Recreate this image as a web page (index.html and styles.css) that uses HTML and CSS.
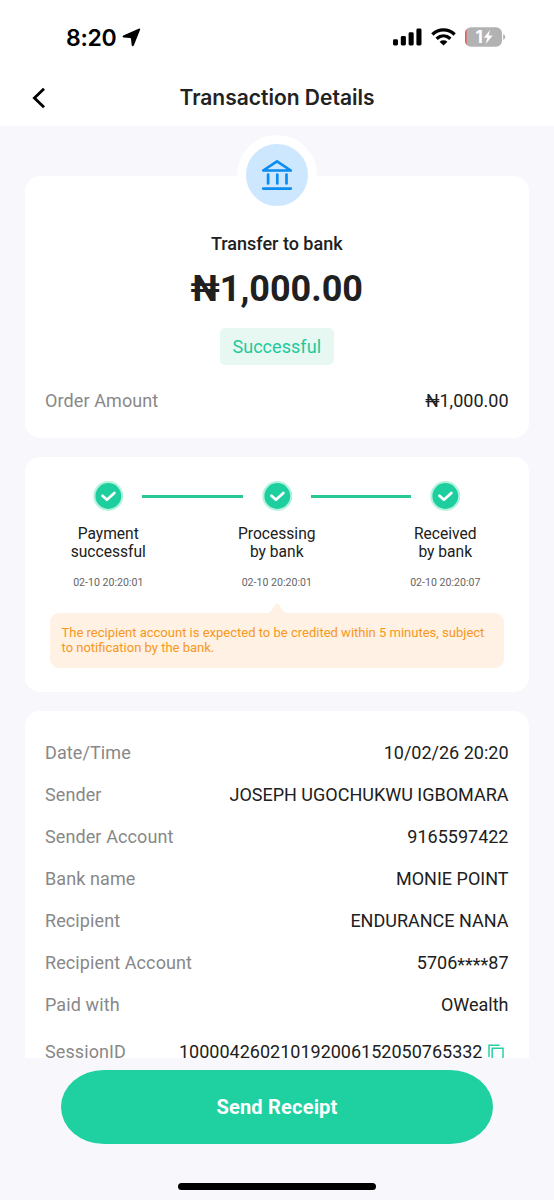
FILE: index.html
```html
<!DOCTYPE html>
<html lang="en">
<head>
<meta charset="utf-8">
<title>Transaction Details</title>
<link rel="stylesheet" href="styles.css">
</head>
<body>
<div class="screen">
  <header class="header">
    <div class="status">
      <div class="status-left">
        <span class="clock">8:20</span>
        <svg class="location" width="19" height="19" viewBox="0 0 19 19"><path d="M16.6.7Q18.7 0 18 2.1L11.9 17.2Q10.7 19.2 9.7 17.2L9 10.9Q8.9 10.1 8.1 10L1.5 9.6Q-.3 8.8 1.3 7.5Z" fill="#000"/></svg>
      </div>
      <div class="status-right">
        <svg width="29" height="18" viewBox="0 0 29 18"><rect x="0" y="11.3" width="5" height="6.2" rx="1.4"/><rect x="7.8" y="8" width="5.1" height="9.5" rx="1.4"/><rect x="15.6" y="4.3" width="5.1" height="13.2" rx="1.4"/><rect x="23.4" y=".6" width="5.1" height="16.9" rx="1.4"/></svg>
        <svg width="25" height="18" viewBox="0 0 25 18"><g fill="none" stroke="#000" stroke-width="3.4"><path d="M1.4 6.4C7.8.3 17.2.3 23.6 6.4"/><path d="M5.6 10.7C9.8 6.9 15.2 6.9 19.4 10.7"/></g><path d="M8.6 13.7C11 11.8 14 11.8 16.4 13.7L12.5 17.6Z"/></svg>
        <svg width="41" height="20" viewBox="0 0 41 20"><defs><clipPath id="cell"><rect x="0" y=".3" width="37" height="19.4" rx="6"/></clipPath></defs><g clip-path="url(#cell)"><rect width="37" height="20" fill="#b2b2b2"/><rect width="1.6" height="20" fill="#ef5a50"/></g><path d="M38.2 7Q40.3 8 40.3 10T38.2 13Z" fill="#b2b2b2"/><text x="10.6" y="15.8" class="charge">1</text><path d="M25 3L18.8 10.8H22.4L20.6 17L27.8 8.6H23.7Z" fill="#fff"/></svg>
      </div>
    </div>
    <div class="nav">
      <svg class="back" width="14" height="22" viewBox="0 0 14 22"><path d="M12 1.8L2.4 11L12 20.2" fill="none" stroke="#000" stroke-width="2.8"/></svg>
      <h1 class="title">Transaction Details</h1>
    </div>
  </header>

  <main class="content">
    <section class="card summary">
      <div class="badge">
        <svg width="32" height="32" viewBox="0 0 32 32"><g fill="none" stroke="#0b8cf0" stroke-width="2.7" stroke-linecap="round" stroke-linejoin="round"><path d="M2.2 11.5L16 2.3L29.8 11.5Z"/><path d="M2.2 29.6H29.8M7.1 15.5V24.5M16.3 15.5V24.5M25.5 15.5V24.5"/></g></svg>
      </div>
      <div class="kind">Transfer to bank</div>
      <div class="amount">₦1,000.00</div>
      <div class="chip">Successful</div>
      <div class="row order"><span class="label">Order Amount</span><span class="value">₦1,000.00</span></div>
    </section>

    <section class="card progress">
      <div class="steps">
        <div class="step">
          <svg class="tick" width="32" height="32" viewBox="0 0 32 32"><circle cx="16.3" cy="16" r="15" fill="#b5f2dd"/><circle cx="16.3" cy="16" r="12.9" fill="#1dcf9f"/><path d="M10.5 15.8L14.9 19.8L22.4 13" fill="none" stroke="#fff" stroke-width="2.7" stroke-linecap="round" stroke-linejoin="round"/></svg>
          <div class="step-name">Payment<br>successful</div><div class="step-time">02-10 20:20:01</div>
        </div>
        <div class="line"></div>
        <div class="step">
          <svg class="tick" width="32" height="32" viewBox="0 0 32 32"><circle cx="16.3" cy="16" r="15" fill="#b5f2dd"/><circle cx="16.3" cy="16" r="12.9" fill="#1dcf9f"/><path d="M10.5 15.8L14.9 19.8L22.4 13" fill="none" stroke="#fff" stroke-width="2.7" stroke-linecap="round" stroke-linejoin="round"/></svg>
          <div class="step-name">Processing<br>by bank</div><div class="step-time">02-10 20:20:01</div>
        </div>
        <div class="line"></div>
        <div class="step">
          <svg class="tick" width="32" height="32" viewBox="0 0 32 32"><circle cx="16.3" cy="16" r="15" fill="#b5f2dd"/><circle cx="16.3" cy="16" r="12.9" fill="#1dcf9f"/><path d="M10.5 15.8L14.9 19.8L22.4 13" fill="none" stroke="#fff" stroke-width="2.7" stroke-linecap="round" stroke-linejoin="round"/></svg>
          <div class="step-name">Received<br>by bank</div><div class="step-time">02-10 20:20:07</div>
        </div>
      </div>
      <svg class="pointer" width="18" height="10" viewBox="0 0 18 10"><path d="M0 10Q2 9.6 3.6 7L7.2 1.6Q9-.4 10.8 1.6L14.4 7Q16 9.6 18 10Z" fill="#fff1e3"/></svg>
      <div class="notice">The recipient account is expected to be credited within 5 minutes, subject<br>to notification by the bank.</div>
    </section>

    <section class="card details">
      <div class="row"><span class="label">Date/Time</span><span class="value">10/02/26 20:20</span></div>
      <div class="row"><span class="label">Sender</span><span class="value">JOSEPH UGOCHUKWU IGBOMARA</span></div>
      <div class="row"><span class="label">Sender Account</span><span class="value">9165597422</span></div>
      <div class="row"><span class="label">Bank name</span><span class="value">MONIE POINT</span></div>
      <div class="row"><span class="label">Recipient</span><span class="value">ENDURANCE NANA</span></div>
      <div class="row"><span class="label">Recipient Account</span><span class="value">5706<span class="mask">****</span>87</span></div>
      <div class="row"><span class="label">Paid with</span><span class="value">OWealth</span></div>
      <div class="row session"><span class="label">SessionID</span><span class="value">100004260210192006152050765332</span><svg class="copy" width="16" height="16" viewBox="0 0 16 16"><g fill="none" stroke="#28cfa4" stroke-width="1.5"><path d="M1 13V1.2H11.6"/><path d="M4.2 16V4.2H15V16"/></g></svg></div>
    </section>
  </main>

  <footer class="footer">
    <button class="send">Send Receipt</button>
    <div class="home"></div>
  </footer>
</div>
</body>
</html>
```
FILE: styles.css
```css
* { box-sizing: border-box; }
body { margin: 0; background: #f7f7fc; color: #202020; font-family: Roboto, sans-serif; }
.screen { width: 554px; height: 1200px; display: flex; flex-direction: column; overflow: hidden; }
.header { height: 126px; flex: none; background: #fff; }
.status { height: 70px; padding: 4px 48px 0 66px; display: flex; justify-content: space-between; align-items: center; }
.status-left { display: flex; align-items: center; gap: 6px; padding-top: 1px; }
.clock { font: 600 23px/28px Inter, sans-serif; color: #000; letter-spacing: -0.3px; }
.status-right { display: flex; align-items: center; gap: 9px; }
.charge { font: 700 17px Inter, sans-serif; fill: #fff; }
.nav { height: 56px; display: grid; grid-template-columns: 60px 1fr 60px; align-items: center; }
.back { margin-left: 32px; }
.title { margin: 0; text-align: center; font: 600 21px/30px Inter, sans-serif; color: #222; }
.content { height: 932px; flex: none; padding: 49.5px 25px 0 24.5px; overflow: hidden; display: flex; flex-direction: column; gap: 19px; }
.card { flex: none; background: #fff; border-radius: 15px; padding: 0 20.5px; }
.summary { height: 262px; display: flex; flex-direction: column; align-items: center; }
.badge { flex: none; width: 80px; height: 80px; margin-top: -40.5px; border: 9px solid #fff; border-radius: 50%; background: #cde7ff; display: grid; place-items: center; }
.kind { margin-top: 17px; font-size: 18px; line-height: 24px; font-weight: 500; }
.amount { margin-top: 11px; font-size: 36px; line-height: 44px; font-weight: 700; }
.chip { margin-top: 17px; width: 114px; height: 37px; border-radius: 5px; background: #e7f8f3; color: #1fc89b; font-size: 18px; line-height: 37px; text-align: center; letter-spacing: 0.05px; }
.row { display: flex; justify-content: space-between; align-items: center; height: 42px; font-size: 18px; }
.order { align-self: stretch; margin-top: 14px; }
.label { color: #888; letter-spacing: 0.1px; }
.mask { display: inline-block; transform: translateY(2px); }
.progress { height: 235.5px; padding: 23.5px 25px 0; display: flex; flex-direction: column; }
.steps { display: flex; justify-content: center; }
.step { width: 68px; display: flex; flex-direction: column; align-items: center; text-align: center; white-space: nowrap; }
.line { width: 100.5px; height: 3px; margin-top: 14.5px; background: #28c997; }
.step-name { margin-top: 13px; font-size: 15.6px; line-height: 18px; }
.step-time { margin-top: 14px; font-size: 10.6px; line-height: 16px; color: #666; }
.pointer { align-self: center; margin-top: 12px; }
.notice { height: 55px; border-radius: 9px; background: #fff1e3; color: #f6981c; padding: 12px 12px 0; font-size: 13px; line-height: 15px; white-space: nowrap; }
.details { padding-top: 20px; height: 400px; }
.session { height: 53px; }
.session .value { margin-left: auto; }
.copy { margin: 0 5px 0 5px; }
.footer { padding-top: 12px; display: flex; flex-direction: column; align-items: center; }
.send { width: 432px; height: 73.5px; border: 0; border-radius: 43px / 37px; background: #1fd0a1; color: #fff; font: 700 20px/24px Roboto, sans-serif; letter-spacing: 0.2px; }
.home { width: 198px; height: 6.5px; margin-top: 39.5px; border-radius: 4px; background: #000; }
```
